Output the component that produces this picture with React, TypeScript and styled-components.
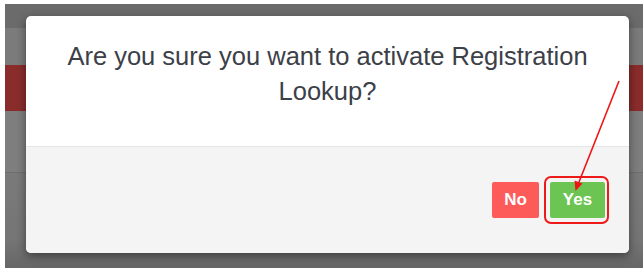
import React from "react";
import styled, { createGlobalStyle } from "styled-components";

const Global = createGlobalStyle`
  html, body { margin: 0; padding: 0; background: #fff; }
  * { box-sizing: border-box; }
`;

const Frame = styled.div`
  position: relative;
  width: 643px;
  height: 268px;
  padding: 4px 0 0 5px;
  background: #fff;
  overflow: hidden;
  font-family: "Liberation Sans", Arial, Helvetica, sans-serif;
`;

const Backdrop = styled.div`
  display: flex;
  flex-direction: column;
  height: 100%;
  background: #7b7b7b;
`;

const TopBar = styled.div`
  height: 24px;
  flex: none;
  background: #6b6b6b;
`;

const RedBand = styled.div`
  margin-top: 37px;
  height: 46px;
  flex: none;
  background: #8a2c2c;
`;

const Gap = styled.div<{ $h: number }>`
  height: ${(p) => p.$h}px;
  flex: none;
  background: #7e7e7e;
`;

const LowerArea = styled.div`
  flex: 1;
  border-top: 1px solid #6f6f6f;
  background: linear-gradient(#7a7a7a, #757575 70%, #666 100%);
`;

const Modal = styled.div`
  position: absolute;
  left: 26px;
  top: 16px;
  width: 603px;
  height: 237px;
  display: flex;
  flex-direction: column;
  background: #fff;
  border-radius: 5px;
  overflow: hidden;
  box-shadow: 0 3px 10px rgba(0, 0, 0, 0.45);
`;

const Body = styled.div`
  height: 131px;
  flex: none;
  padding: 23px 32px 0;
  border-bottom: 1px solid #e6e6e6;
  text-align: center;
`;

const Message = styled.p`
  margin: 0;
  font-size: 25.5px;
  line-height: 35px;
  color: #3c4047;
`;

const Footer = styled.div`
  flex: 1;
  display: flex;
  justify-content: flex-end;
  align-items: flex-start;
  gap: 11px;
  padding: 35px 24px 0;
  background: #f4f4f4;
`;

const Button = styled.button<{ $tone: "no" | "yes"; $w: number }>`
  width: ${(p) => p.$w}px;
  height: 36px;
  padding: 0;
  border: none;
  border-radius: 2px;
  background: ${(p) => (p.$tone === "no" ? "#fd5a5a" : "#6cc552")};
  color: #fff;
  font-family: "Liberation Sans", Arial, Helvetica, sans-serif;
  font-size: 17px;
  font-weight: 700;
  cursor: pointer;
`;

const Highlight = styled.div`
  position: absolute;
  left: 544px;
  top: 176px;
  width: 65px;
  height: 48px;
  border: 2px solid #ee1a1a;
  border-radius: 7px;
  pointer-events: none;
`;

const ArrowLayer = styled.svg`
  position: absolute;
  left: 0;
  top: 0;
  width: 643px;
  height: 268px;
  pointer-events: none;
`;

export default function App() {
  return (
    <>
      <Global />
      <Frame>
        <Backdrop>
          <TopBar />
          <RedBand />
          <Gap $h={61} />
          <LowerArea />
        </Backdrop>
        <Modal>
          <Body>
            <Message>Are you sure you want to activate Registration Lookup?</Message>
          </Body>
          <Footer>
            <Button $tone="no" $w={47}>No</Button>
            <Button $tone="yes" $w={55}>Yes</Button>
          </Footer>
        </Modal>
        <Highlight />
        <ArrowLayer viewBox="0 0 643 268">
          <line x1="619" y1="81" x2="579" y2="182" stroke="#f01414" strokeWidth="1.6" />
          <polygon points="575.5,191 574.5,180.5 582.5,183.5" fill="#f01414" />
        </ArrowLayer>
      </Frame>
    </>
  );
}
